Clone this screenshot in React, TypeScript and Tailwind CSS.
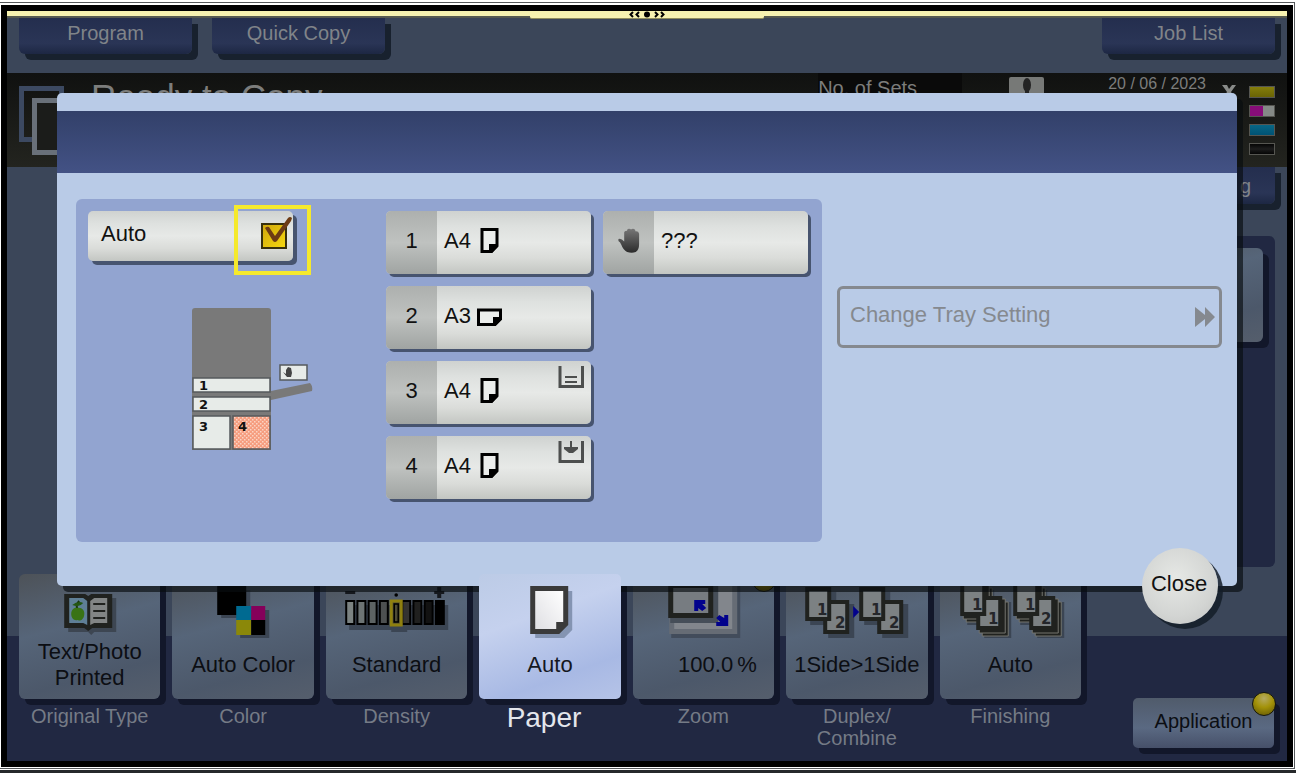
import React from "react";

const dimTile =
  "bg-[linear-gradient(165deg,#4d5258_0%,#566579_40%,#4c586a_75%,#555e6c_100%)] shadow-[6px_6px_0_#12172a] rounded-[6px]";
const navButton =
  "w-[173px] rounded-b-[6px] bg-[linear-gradient(to_bottom,#242e4e,#2a3556_70%,#1d2743)] text-center text-[20px] text-[#808489] shadow-[6px_6px_0_#18212e]";
const silver =
  "bg-[linear-gradient(to_bottom,#cfd2d0_0%,#dee1df_25%,#e7e9e7_50%,#dadcd9_75%,#c3c6c2_100%)]";

function BookIcon() {
  return (
    <svg viewBox="0 0 141 64" className="h-16 w-full" aria-hidden="true">
      <path d="M49 24H97V58H75L72 61L69 58H49Z" fill="#3d4652" />
      <path d="M45 20H66L69 22L72 20H93V54H73L69 57L65 54H45Z" fill="#20221f" />
      <path d="M50 24H64L68 27V51L64 49H50Z" fill="#5f7f96" />
      <path d="M88 24H75L71 27V51L75 49H88Z" fill="#828585" />
      <path d="M74 30H86M74 37H86M74 44H86" stroke="#20221f" strokeWidth="2" />
      <path d="M58 35C57 32 58 29 60 27" stroke="#17330d" strokeWidth="2" fill="none" />
      <path d="M53 31Q59 26 64 29Q60 34 53 31Z" fill="#245612" />
      <path d="M58 34C62 33 66 36 65 41C64 47 60 47 58 46C55 47 52 44 52 40C52 36 55 33 58 34Z" fill="#397315" />
    </svg>
  );
}

function ColorIcon() {
  return (
    <svg viewBox="0 0 141 64" className="h-16 w-full" aria-hidden="true">
      <path d="M49 16H78V44H49ZM68 36H97V64H68Z" fill="#3b4553" />
      <path d="M45 10H74V41H45Z" fill="#000" />
      <path d="M64 32H79V46H64Z" fill="#006a91" />
      <path d="M79 32H93V46H79Z" fill="#85005a" />
      <path d="M64 46H79V61H64Z" fill="#8b8809" />
      <path d="M79 46H93V61H79Z" fill="#000" />
    </svg>
  );
}

const densityFills = ["#7c8382", "#6d7474", "#5d6363", "#4d5050", "#454336", "#343331", "#20201f", "#121212", "#000"];

function DensityIcon() {
  return (
    <svg viewBox="0 0 141 64" className="h-16 w-full" aria-hidden="true">
      <path d="M23 31H122V56H81V58H65V56H23Z" fill="#3b4553" />
      <path d="M19 17H29V20H19ZM108 17H118V20H108ZM111 13H115V24H111Z" fill="#15181d" />
      {densityFills.map((fill, i) => (
        <rect key={i} x={20 + i * 11.2} y="27" width="8" height="23" fill={fill} stroke="#000" strokeWidth="2" />
      ))}
      <rect x="65" y="27" width="10" height="24" fill="#4d4a35" stroke="#8f8010" strokeWidth="3" />
      <rect x="68" y="30" width="4" height="18" fill="none" stroke="#000" strokeWidth="1.5" />
      <circle cx="70" cy="21" r="1.8" fill="#000" />
    </svg>
  );
}

function PaperIcon() {
  return (
    <svg viewBox="0 0 141 64" className="h-16 w-full" aria-hidden="true">
      <defs>
        <linearGradient id="sheet" x1="0" y1="1" x2="1" y2="0">
          <stop offset="0" stopColor="#dfdfe3" />
          <stop offset="1" stopColor="#fff" />
        </linearGradient>
      </defs>
      <path d="M56 17H93V56L85 64H56Z" fill="#8494b2" />
      <path d="M51 12H89V51L80 60H51Z" fill="#3a3a3a" />
      <path d="M56 17H84V48H77V55H56Z" fill="url(#sheet)" />
    </svg>
  );
}

function ZoomIcon() {
  return (
    <svg viewBox="0 0 141 64" className="h-16 w-full" aria-hidden="true">
      <path d="M38 12H107V64H38Z" fill="#424c5b" />
      <path d="M36 8H104V60H36Z" fill="#666c75" />
      <path d="M41 8H99V55H41Z" fill="#82868c" />
      <path d="M37 8H85V49H37Z" fill="#464e58" />
      <path d="M35 8H80V44H35Z" fill="#20221f" />
      <path d="M40 14H75V39H40Z" fill="#777c81" />
      <path d="M61 26H72V30H69L73 34L69 37L65 34V37H61Z" fill="#02028c" />
      <path d="M95 52H83V48H87L83 44L86 41L91 44V41H95Z" fill="#02028c" />
    </svg>
  );
}

function Sheet({ x, y, label }: { x: number; y: number; label: string }) {
  return (
    <g>
      <rect x={x} y={y} width="26" height="34" fill="#20221f" />
      <rect x={x + 4} y={y + 4} width="18" height="26" fill="#7c8183" />
      <text x={x + 17} y={y + 28} fontSize="15" fontWeight="700" textAnchor="middle" fill="#24262a" fontFamily="DejaVu Sans, sans-serif">
        {label}
      </text>
    </g>
  );
}

function DuplexIcon() {
  return (
    <svg viewBox="0 0 141 64" className="h-16 w-full" aria-hidden="true">
      {[0, 54].map((dx) => (
        <g key={dx}>
          <path d={`M${24 + dx} 18h26v12h18v34h-26v-13h-18Z`} fill="#3b4553" />
          <Sheet x={37 + dx} y={26} label="2" />
          <Sheet x={19 + dx} y={13} label="1" />
        </g>
      ))}
      <path d="M67 32L73 38L67 44Z" fill="#02028c" />
    </svg>
  );
}

function FinishIcon() {
  return (
    <svg viewBox="0 0 141 64" className="h-16 w-full" aria-hidden="true">
      {[0, 53].map((dx) => (
        <g key={dx}>
          <path d={`M${27 + dx} 16h27v12h17v36h-27v-13h-17Z`} fill="#3b4553" />
          {[6, 3].map((o) => (
            <g key={o} fill="#20221f" stroke="#74756f" strokeWidth="1">
              <path d={`M${20 + dx + o} ${8 + o}h26v34h-26Z`} />
              <path d={`M${36 + dx + o} ${22 + o}h26v34h-26Z`} />
            </g>
          ))}
          <Sheet x={36 + dx} y={22} label={dx ? "2" : "1"} />
          <Sheet x={20 + dx} y={8} label="1" />
        </g>
      ))}
    </svg>
  );
}

const functions: { label: string; value: React.ReactNode; icon: React.ReactNode; active?: boolean; badge?: boolean }[] = [
  { label: "Original Type", value: "Text/Photo Printed", icon: <BookIcon /> },
  { label: "Color", value: "Auto Color", icon: <ColorIcon /> },
  { label: "Density", value: "Standard", icon: <DensityIcon /> },
  { label: "Paper", value: "Auto", icon: <PaperIcon />, active: true },
  { label: "Zoom", value: <span className="pl-7">100.0<span className="pl-1">%</span></span>, icon: <ZoomIcon />, badge: true },
  { label: "Duplex/ Combine", value: "1Side>1Side", icon: <DuplexIcon /> },
  { label: "Finishing", value: "Auto", icon: <FinishIcon /> },
];

function Orb({ className }: { className: string }) {
  return (
    <span
      className={`absolute size-6 rounded-full border border-[#15160c] bg-[radial-gradient(circle_at_50%_25%,#b5aa62_0%,#a39209_45%,#5d5205_100%)] ${className}`}
    />
  );
}

function PortraitPage() {
  return (
    <svg viewBox="0 0 25 25" className="size-[25px]" aria-hidden="true">
      <path d="M5 1.500H20V18L14.500 23.500H5Z" fill="#eceeec" stroke="#000" strokeWidth="3" />
      <path d="M12 16H21V18.500L15 25H12Z" fill="#000" />
    </svg>
  );
}

function LandscapePage() {
  return (
    <svg viewBox="0 0 25 25" className="mt-1 size-[25px]" aria-hidden="true">
      <path d="M1.500 5H23.500V14L18 19.500H1.500Z" fill="#eceeec" stroke="#000" strokeWidth="3" />
      <path d="M16 12H25V14.500L18.500 21H16Z" fill="#000" />
    </svg>
  );
}

function TrayLevel({ empty }: { empty?: boolean }) {
  return (
    <svg viewBox="0 0 26 24" className="absolute top-1 right-[7px] h-6 w-[26px]" aria-hidden="true">
      <path d="M2 1V21.500H24.500V1" fill="none" stroke="#4d4f4e" strokeWidth="3" />
      {empty ? (
        <path d="M12 1H14V7H20V9L15 13H11L6 9V7H12Z" fill="#4d4f4e" />
      ) : (
        <path d="M7 12H19M7 17H19" stroke="#4d4f4e" strokeWidth="2" />
      )}
    </svg>
  );
}

function Hand({ className }: { className: string }) {
  return (
    <svg viewBox="0 0 22 26" className={className} aria-hidden="true">
      <path
        d="M0 11.500Q3 10.500 6 14V4.500Q6.500 2.500 9 3V2Q10 0 12.500 1L13 1.500Q15.500 0 17.500 2V3.500Q21 3 21.500 6V17Q21.500 23 18 25Q14 26.500 9 25Q5 23 3 17.500Q2 14.500 0 13.500Z"
        fill="url(#handfill)"
      />
      <defs>
        <linearGradient id="handfill" x1="0" y1="0" x2="0" y2="1">
          <stop offset="0" stopColor="#777" />
          <stop offset="1" stopColor="#2b2b2b" />
        </linearGradient>
      </defs>
    </svg>
  );
}

function TrayButton({ slot, size, children }: { slot: React.ReactNode; size: React.ReactNode; children?: React.ReactNode }) {
  return (
    <button className={`relative flex h-[63px] w-[205px] items-stretch rounded-[5px] text-[22px] text-[#111] shadow-[3px_3px_0_#47546f] ${silver}`}>
      <span className="flex w-[51px] items-center justify-center rounded-l-[5px] bg-[linear-gradient(to_bottom,#adb0ae,#bfc2c0_50%,#a0a4a2)] pb-1">{slot}</span>
      <span className="flex items-center gap-1.5 pb-1 pl-[7px]">{size}</span>
      {children}
    </button>
  );
}

function Printer() {
  return (
    <svg viewBox="0 0 122 144" className="ml-26 h-36 w-[122px]" role="img" aria-label="Paper trays">
      <defs>
        <pattern id="dots" width="4" height="4" patternUnits="userSpaceOnUse">
          <rect width="4" height="4" fill="#f69d7f" />
          <rect width="1.500" height="1.500" fill="#fbd4c4" />
          <rect x="2" y="2" width="1.500" height="1.500" fill="#fbd4c4" />
        </pattern>
      </defs>
      <path d="M3 1H76Q79 1 79 4V143H0V4Q0 1 3 1Z" fill="#797979" />
      <path d="M79 84L118 76Q121 79 120 84L79 93Z" fill="#797979" />
      <g fill="#e7ebe8" stroke="#55595c" strokeWidth="1.500">
        <rect x="1" y="71" width="77" height="14" />
        <rect x="1" y="90" width="77" height="14" />
        <rect x="1" y="109" width="37" height="33" />
        <rect x="41" y="109" width="37" height="33" fill="url(#dots)" />
        <rect x="88" y="58" width="27" height="15" />
      </g>
      <g fontSize="13" fontWeight="700" fill="#111" fontFamily="DejaVu Sans, sans-serif">
        <text x="7" y="83">1</text>
        <text x="7" y="102">2</text>
        <text x="7" y="124">3</text>
        <text x="46" y="124">4</text>
      </g>
      <path d="M91 65L94 67V63L96 60L99 61L100 66L99 70H95Z" fill="#444" />
    </svg>
  );
}

function PaperDialog() {
  return (
    <section
      role="dialog"
      aria-label="Paper"
      className="absolute inset-x-[50px] top-[82px] z-10 h-[493px] rounded-[5px] bg-[#b9cbe7] pt-[18px] shadow-[6px_6px_0_rgba(8,13,16,0.65)]"
    >
      <header className="h-[62px] bg-[linear-gradient(to_bottom,#324069,#435285)]" />
      <div className="mt-[26px] flex gap-[15px] pr-[15px] pl-[19px]">
        <div className="flex h-[343px] w-[746px] rounded-[6px] bg-[#92a4d0] p-3">
          <div className="flex w-[298px] flex-col gap-[46px]">
            <label className={`relative flex h-[50px] w-[205px] items-center justify-between rounded-[5px] pr-1.5 pl-[13px] text-[22px] text-[#111] shadow-[4px_4px_0_#47546f] ${silver}`}>
              <span className="pb-1.5">Auto</span>
              <span className="relative size-[26px]">
                <input
                  type="checkbox"
                  defaultChecked
                  className="block size-[26px] appearance-none border-2 border-[#38300d] bg-[linear-gradient(135deg,#d1a90c,#f5d60f)]"
                />
                <svg viewBox="0 0 32 34" className="pointer-events-none absolute -top-2 left-0 h-[34px] w-8" aria-hidden="true">
                  <path d="M4 13Q6 11 8 12L14 21L27 3Q29 1 31 3L30 6L16 26Q14 28 12 26Z" fill="#6d3b14" />
                </svg>
              </span>
              <span className="absolute -top-1.5 -right-[18px] h-[70px] w-[77px] border-4 border-[#f5e92c]" />
            </label>
            <Printer />
          </div>
          <div className="grid auto-rows-[63px] grid-cols-[205px_205px] gap-x-[12px] gap-y-3">
            <TrayButton slot="1" size={<>A4 <PortraitPage /></>} />
            <TrayButton slot={<Hand className="h-[25px] w-[22px]" />} size="???" />
            <TrayButton slot="2" size={<>A3 <LandscapePage /></>} />
            <span />
            <TrayButton slot="3" size={<>A4 <PortraitPage /></>}>
              <TrayLevel />
            </TrayButton>
            <span />
            <TrayButton slot="4" size={<>A4 <PortraitPage /></>}>
              <TrayLevel empty />
            </TrayButton>
          </div>
        </div>
        <button
          disabled
          className="mt-[87px] flex h-[62px] flex-1 items-center justify-between rounded-[6px] border-[3px] border-[#85898f] pr-1 pb-1.5 pl-2.5 text-[22px] text-[#85898f]"
        >
          Change Tray Setting
          <svg viewBox="0 0 20 20" className="mt-1.5 size-5" aria-hidden="true">
            <path d="M0 0L10 8V0L20 10L10 20V12L0 20Z" fill="#85898f" />
          </svg>
        </button>
      </div>
      <button className="absolute right-[19px] -bottom-[38px] size-19 rounded-full bg-[radial-gradient(circle_at_45%_40%,#e6e8e5,#d3d5d3_60%,#c0c1c0)] pr-0.5 pb-1.5 text-[22px] text-[#111] shadow-[5px_5px_0_rgba(20,29,40,0.85)]">
        Close
      </button>
    </section>
  );
}

const inks = [
  { name: "Yellow", style: "bg-[linear-gradient(to_bottom,#847d0b,#6a6405)]" },
  { name: "Magenta", style: "bg-[linear-gradient(to_right,#870d78_56%,#858986_56%)]" },
  { name: "Cyan", style: "bg-[linear-gradient(to_bottom,#086785,#005274)]" },
  { name: "Black", style: "bg-[linear-gradient(to_bottom,#050505,#1d1d1d_50%,#050505)]" },
];

function StatusBar() {
  return (
    <div className="flex h-[94px] items-start bg-[linear-gradient(to_bottom,#101110,#23241f)] pr-3 pl-3 text-[#7c7d7c]">
      <svg viewBox="0 0 60 82" className="h-[82px] w-[60px]" aria-hidden="true">
        <path d="M2.500 15.500H42.500V66.500H2.500Z" fill="none" stroke="#3c4961" strokeWidth="5" />
        <path d="M15.500 27.500H58V79.500H15.500Z" fill="#1b1c1a" stroke="#697079" strokeWidth="5" />
      </svg>
      <h1 className="flex-1 pt-1 pl-3 text-[35px] leading-10">Ready to Copy</h1>
      <div className="h-11 w-36 bg-[#0a0a0a] pt-[3px] text-[20px] leading-6">No. of Sets</div>
      <svg viewBox="0 0 35 40" className="mt-1 mr-16 ml-[47px] h-10 w-[35px]" aria-hidden="true">
        <rect width="35" height="40" rx="2" fill="#777977" />
        <ellipse cx="18" cy="8" rx="4" ry="7" fill="#242424" />
        <path d="M16 14H20V22H16Z" fill="#242424" />
      </svg>
      <time className="text-[16px] leading-[22px]">20 / 06 / 2023</time>
      <svg viewBox="0 0 16 20" className="mt-3 mr-3 ml-[15px] h-5 w-4" aria-hidden="true">
        <path d="M1 0H6L8 4L11 0H15L10 7L15 15H11L8 10L5 15H1L6 7Z" fill="#898b89" />
      </svg>
      <div className="flex flex-col gap-[7px] pt-[13px]">
        {inks.map((ink) => (
          <span key={ink.name} aria-label={ink.name} role="img" className={`h-3 w-[26px] border border-[#565651] ${ink.style}`} />
        ))}
      </div>
    </div>
  );
}

export default function App() {
  return (
    <div className="flex min-h-screen flex-col border-b-[3px] border-[#26292b] bg-white pt-0.5 font-['Liberation_Sans',Arial,sans-serif]">
      <div className="mr-px mb-px flex flex-1 flex-col border-t border-r border-b border-[#55585b] pt-0.5 pr-px pb-px pl-px">
        <main className="relative flex min-h-[750px] flex-1 flex-col border-6 border-black bg-[linear-gradient(to_top,#212842_125px,#3b4659_125px)]">
          <div className="relative h-[7px] border-b-2 border-[#565a50] bg-[#f6f2b0]">
            <div className="absolute left-1/2 flex h-2 w-[234px] -translate-x-1/2 justify-center rounded-b-[2px] border-b border-[#8e8c5d] bg-[#f6f2b0]">
              <svg viewBox="0 0 36 7" className="h-[7px] w-9" aria-hidden="true">
                <path d="M4 1L1.500 3.500L4 6M10 1L7.500 3.500L10 6M26 1L28.500 3.500L26 6M32 1L34.500 3.500L32 6" fill="none" stroke="#000" strokeWidth="2" />
                <circle cx="18" cy="3.500" r="3" fill="#000" />
              </svg>
            </div>
          </div>
          <nav className="flex h-[55px] gap-5 px-3 [&>button]:h-9">
            <button className={`${navButton} pb-2.5`}>Program</button>
            <button className={`${navButton} pb-2.5`}>Quick Copy</button>
            <button className={`${navButton} ml-auto pb-2.5`}>Job List</button>
          </nav>
          <StatusBar />
          <div className="flex flex-1 flex-col pr-3 pl-16">
            <button className={`${navButton} h-[37px] self-end pr-6 !text-right`}>g</button>
            <div className="mt-8 flex h-[331px] justify-end rounded-[6px] bg-[#212842] p-3">
              <div className={`h-[94px] w-48 ${dimTile}`} />
            </div>
          </div>
          <footer className="absolute inset-x-0 bottom-0 flex h-[187px] justify-between pr-[13px] pl-3">
            <div className="grid w-[1062px] grid-cols-7 gap-3">
              {functions.map((f) => (
                <div key={f.label} className="relative">
                  {f.active && <span className="absolute inset-x-0 top-0 h-[125px] rounded-[6px] shadow-[6px_6px_0_#12172a]" />}
                  <button
                    className={
                      f.active
                        ? "relative z-20 flex h-[125px] w-full flex-col rounded-[5px] bg-[linear-gradient(160deg,#bccbe6_0%,#c5d1ee_35%,#a8b9e4_75%,#b5c3e7_100%)] text-[22px] leading-[26px] text-[#15181f]"
                        : `flex h-[125px] w-full flex-col text-[22px] leading-[26px] text-[#0c0e13] ${dimTile}`
                    }
                  >
                    {f.icon}
                    <span className="flex h-[54px] w-full items-center justify-center px-2">
                      {f.value}
                    </span>
                  </button>
                  {f.badge && <Orb className="-top-1.5 -right-0.5" />}
                  <div
                    className={
                      f.active
                        ? "relative pt-[3px] pr-3 text-center text-[28px] leading-8 text-[#e4e6ec]"
                        : "-mx-3 px-4 pt-1.5 text-center text-[20px] leading-[22px] text-[#757b86]"
                    }
                  >
                    {f.label}
                  </div>
                </div>
              ))}
            </div>
            <div className="relative mt-[124px] h-[50px] w-[141px]">
              <button className="h-full w-full rounded-[5px] bg-[linear-gradient(to_bottom,#505b6b,#5a6982_60%,#465069)] pb-1 text-[20px] text-[#0c0e13] shadow-[6px_6px_0_#12172a]">
                Application
              </button>
              <Orb className="-top-1.5 -right-0.5" />
            </div>
          </footer>
          <PaperDialog />
        </main>
      </div>
    </div>
  );
}
